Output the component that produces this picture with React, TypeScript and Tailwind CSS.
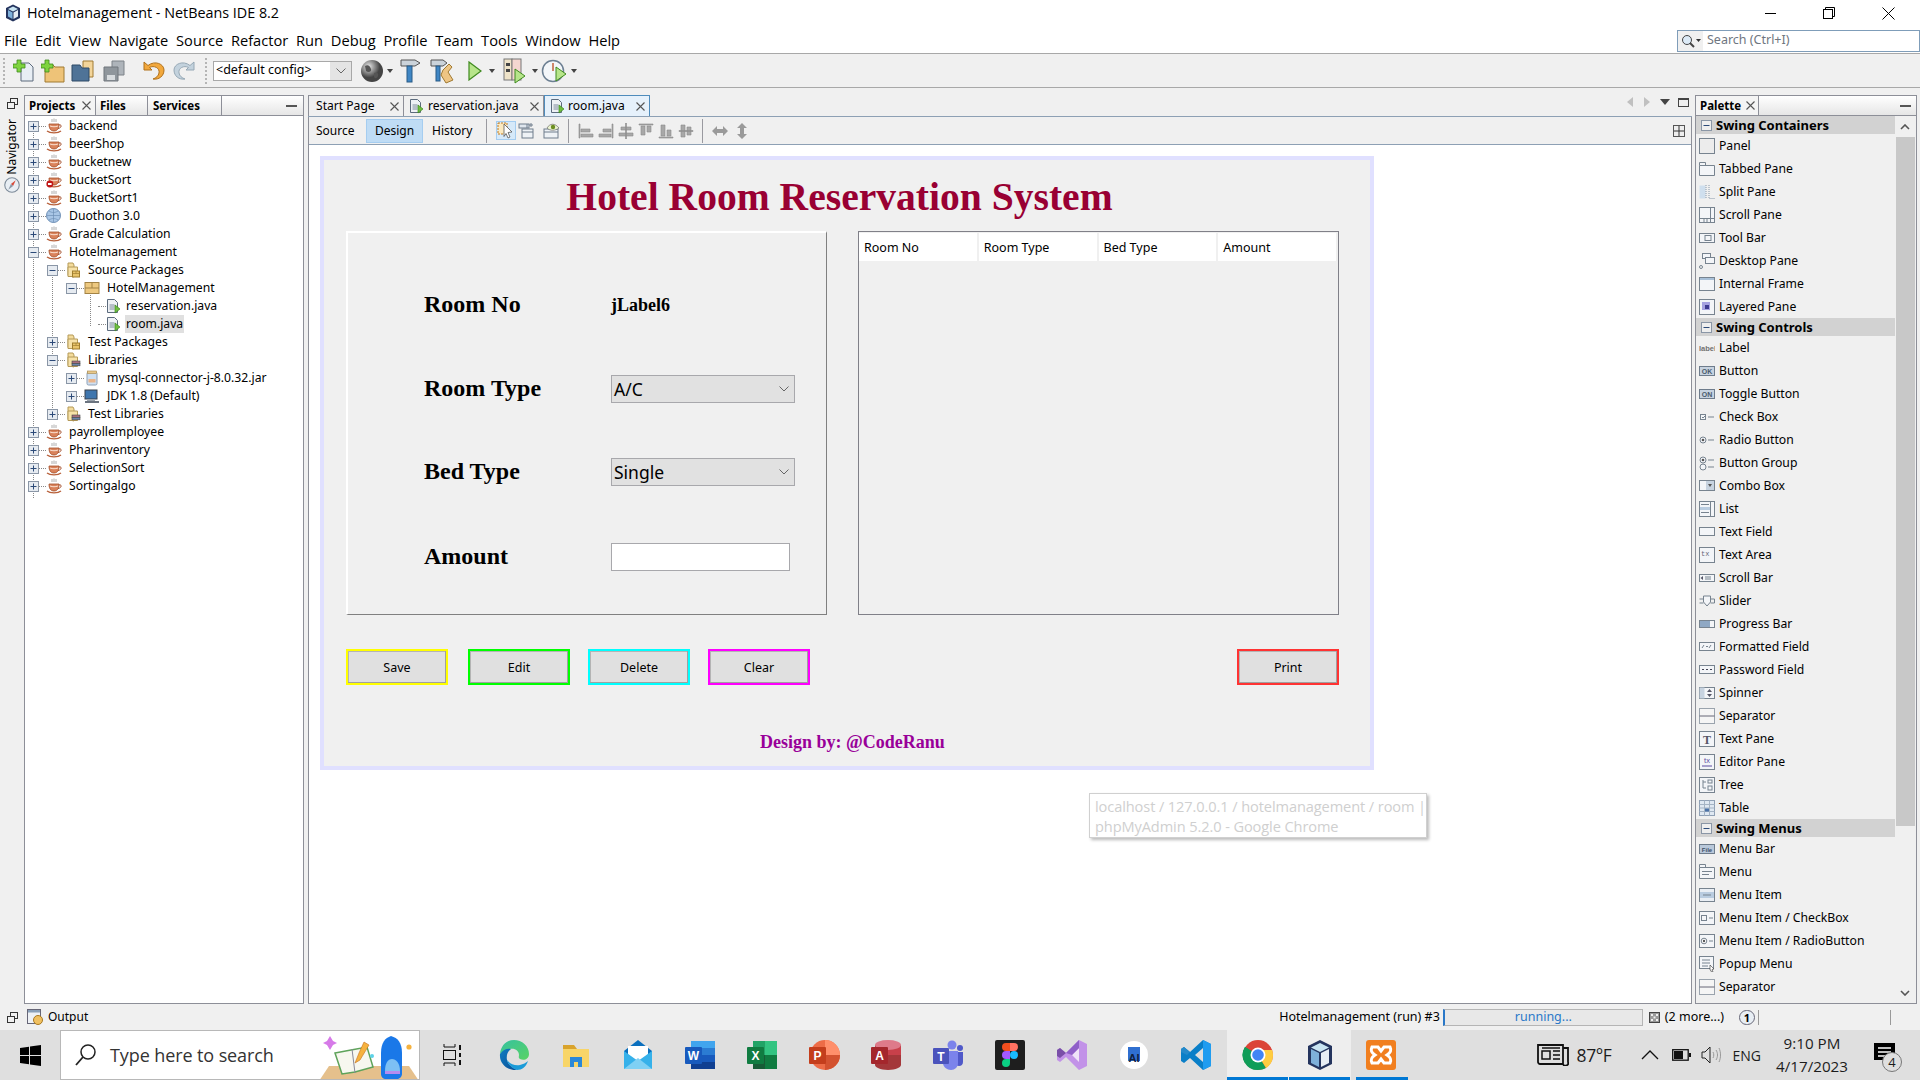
import type { ReactNode } from 'react'

const menuItems = ['File', 'Edit', 'View', 'Navigate', 'Source', 'Refactor', 'Run', 'Debug', 'Profile', 'Team', 'Tools', 'Window', 'Help']

type TreeRow = { depth: number; label: string; icon: string; exp?: '+' | '-'; selected?: boolean }

const treeRows: TreeRow[] = [
  { depth: 0, label: 'backend', icon: 'cup', exp: '+' },
  { depth: 0, label: 'beerShop', icon: 'cup', exp: '+' },
  { depth: 0, label: 'bucketnew', icon: 'cup', exp: '+' },
  { depth: 0, label: 'bucketSort', icon: 'cuperr', exp: '+' },
  { depth: 0, label: 'BucketSort1', icon: 'cup', exp: '+' },
  { depth: 0, label: 'Duothon 3.0', icon: 'globe', exp: '+' },
  { depth: 0, label: 'Grade Calculation', icon: 'cup', exp: '+' },
  { depth: 0, label: 'Hotelmanagement', icon: 'cup', exp: '-' },
  { depth: 1, label: 'Source Packages', icon: 'pkgfolder', exp: '-' },
  { depth: 2, label: 'HotelManagement', icon: 'pkg', exp: '-' },
  { depth: 3, label: 'reservation.java', icon: 'java' },
  { depth: 3, label: 'room.java', icon: 'java', selected: true },
  { depth: 1, label: 'Test Packages', icon: 'pkgfolder', exp: '+' },
  { depth: 1, label: 'Libraries', icon: 'libfolder', exp: '-' },
  { depth: 2, label: 'mysql-connector-j-8.0.32.jar', icon: 'jar', exp: '+' },
  { depth: 2, label: 'JDK 1.8 (Default)', icon: 'jdk', exp: '+' },
  { depth: 1, label: 'Test Libraries', icon: 'libfolder', exp: '+' },
  { depth: 0, label: 'payrollemployee', icon: 'cup', exp: '+' },
  { depth: 0, label: 'Pharinventory', icon: 'cup', exp: '+' },
  { depth: 0, label: 'SelectionSort', icon: 'cup', exp: '+' },
  { depth: 0, label: 'Sortingalgo', icon: 'cup', exp: '+' },
]

const paletteSections = [
  { title: 'Swing Containers', items: ['Panel', 'Tabbed Pane', 'Split Pane', 'Scroll Pane', 'Tool Bar', 'Desktop Pane', 'Internal Frame', 'Layered Pane'] },
  { title: 'Swing Controls', items: ['Label', 'Button', 'Toggle Button', 'Check Box', 'Radio Button', 'Button Group', 'Combo Box', 'List', 'Text Field', 'Text Area', 'Scroll Bar', 'Slider', 'Progress Bar', 'Formatted Field', 'Password Field', 'Spinner', 'Separator', 'Text Pane', 'Editor Pane', 'Tree', 'Table'] },
  { title: 'Swing Menus', items: ['Menu Bar', 'Menu', 'Menu Item', 'Menu Item / CheckBox', 'Menu Item / RadioButton', 'Popup Menu', 'Separator'] },
]

function Svg({ size = 16, children }: { size?: number; children: ReactNode }) {
  return (
    <svg width={size} height={size} viewBox="0 0 16 16" className="shrink-0">
      {children}
    </svg>
  )
}

function CloseX() {
  return (
    <svg width="9" height="9" viewBox="0 0 9 9" className="shrink-0">
      <path d="M0.5 0.5l8 8M8.5 0.5l-8 8" stroke="#555" strokeWidth="1.1" />
    </svg>
  )
}

function Cup() {
  return (
    <>
      <path d="M6 1v3M8 0.5v3.5M10 1v3" stroke="#9a9a9a" strokeWidth="0.8" fill="none" />
      <path d="M3 6h10c0 5-2 7-5 7s-5-2-5-7z" fill="#d9825b" stroke="#a5502c" strokeWidth="0.8" />
      <path d="M4 8c3 1 5 1 8 0" stroke="#fbe3d3" strokeWidth="1" fill="none" />
      <path d="M13 7c3-1 3 3-1 3.5" stroke="#a5502c" fill="none" />
      <path d="M1 13c3 2.5 11 2.5 14 0" stroke="#b8613b" strokeWidth="1.3" fill="none" />
    </>
  )
}

function JavaFile() {
  return (
    <>
      <path d="M2.5 1.5h7l3 3v10h-10z" fill="#eef1f5" stroke="#5c6b7d" />
      <path d="M4.5 7h5M4.5 9h5M4.5 11h5" stroke="#7c8b9c" />
      <path d="M10 7l5 4-5 4z" fill="#6fbf3f" stroke="#3d8a1f" strokeWidth="0.7" />
    </>
  )
}

function FolderBase() {
  return <path d="M3 1h5l1 2v12l-6-1.5z" fill="#f4dc9c" stroke="#b59a58" />
}

function TreeIcon({ name }: { name: string }) {
  if (name === 'cup') return <Svg><Cup /></Svg>
  if (name === 'cuperr')
    return (
      <Svg>
        <Cup />
        <circle cx="3.8" cy="12" r="3.4" fill="#c01818" />
        <rect x="2" y="11" width="3.6" height="2" fill="#fff" />
      </Svg>
    )
  if (name === 'globe')
    return (
      <Svg>
        <circle cx="7.5" cy="7.5" r="7" fill="#a9c6e6" stroke="#6e8fb5" />
        <path d="M0.5 7.5h14M7.5 0.5v14M3 3c3 2 6 2 9 0M3 12c3-2 6-2 9 0" stroke="#6e8fb5" strokeWidth="0.7" fill="none" />
      </Svg>
    )
  if (name === 'pkgfolder')
    return (
      <Svg>
        <FolderBase />
        <path d="M3 5h9.5v9.5H3z" fill="#f7e2a8" stroke="#b59a58" />
        <rect x="7.5" y="9" width="7" height="6" fill="#e8c46a" stroke="#a07e2f" />
        <path d="M7.5 11.5h7M11 9v2.5" stroke="#a07e2f" strokeWidth="0.7" />
      </Svg>
    )
  if (name === 'libfolder')
    return (
      <Svg>
        <FolderBase />
        <path d="M3 5h9.5v9.5H3z" fill="#f7e2a8" stroke="#b59a58" />
        <rect x="7" y="9" width="8" height="2.4" fill="#a8707c" stroke="#444" strokeWidth="0.6" />
        <rect x="7" y="11.4" width="8" height="2.4" fill="#6c86ac" stroke="#444" strokeWidth="0.6" />
      </Svg>
    )
  if (name === 'pkg')
    return (
      <Svg>
        <rect x="1" y="2.5" width="14" height="11" fill="#eec980" stroke="#a38345" />
        <path d="M1 8h14M8 2.5V8" stroke="#a38345" />
      </Svg>
    )
  if (name === 'java') return <Svg><JavaFile /></Svg>
  if (name === 'jar')
    return (
      <Svg>
        <rect x="3" y="2" width="10" height="13" rx="1.5" fill="#cfe0f2" stroke="#8fa0b5" />
        <rect x="3.5" y="1" width="9" height="2.5" fill="#e8c98c" stroke="#a38345" strokeWidth="0.6" />
        <rect x="4.5" y="9" width="7" height="3.5" fill="#eab48a" />
      </Svg>
    )
  return (
    <Svg>
      <rect x="1" y="2" width="12" height="9" fill="#3f76ae" stroke="#39414d" />
      <rect x="3" y="11" width="8" height="2" fill="#9aa3ad" />
      <rect x="1" y="13" width="14" height="2" fill="#6b7480" />
    </Svg>
  )
}

function Expander({ kind }: { kind: '+' | '-' }) {
  return (
    <svg width="11" height="11" viewBox="0 0 11 11" className="relative z-10 shrink-0">
      <rect x="0.5" y="0.5" width="10" height="10" fill="#e6ebf1" stroke="#8a96a6" />
      <path d={kind === '+' ? 'M2.5 5.5h6M5.5 2.5v6' : 'M2.5 5.5h6'} stroke="#2c4a78" />
    </svg>
  )
}

function Project() {
  return (
    <aside className="relative h-full w-[280px] shrink-0 border border-[#8d8f98] bg-white">
      <div className="flex h-[20px] border-b border-[#8d8f98] bg-gradient-to-b from-white to-[#e6e6e6] text-[11.5px] font-bold text-black">
        <div className="flex w-[71px] items-center gap-[7px] border-r border-[#8d8f98] bg-[#f4f4f4] pl-[4px]">
          Projects <CloseX />
        </div>
        <div className="flex w-[52px] items-center border-r border-[#8d8f98] pl-[4px]">Files</div>
        <div className="flex w-[74px] items-center border-r border-[#8d8f98] pl-[5px]">Services</div>
        <div className="flex flex-1 items-center justify-end pr-[6px]">
          <div className="h-[2px] w-[11px] bg-[#555]" />
        </div>
      </div>
      <div className="relative pt-px">
        <div className="absolute left-[8px] top-[12px] h-[370px] border-l border-dotted border-[#888]" />
        <div className="absolute left-[27px] top-[156px] h-[144px] border-l border-dotted border-[#888]" />
        <div className="absolute left-[65px] top-[174px] h-[36px] border-l border-dotted border-[#888]" />
        {treeRows.map((row, i) => (
          <div key={i} className="relative flex h-[18px] items-center text-[12.2px] leading-none text-black">
            <div className="flex w-[40px] shrink-0 items-center" style={{ marginLeft: 3 + row.depth * 19 }}>
              {row.exp ? <Expander kind={row.exp} /> : <div className="ml-[13px] h-0 w-[20px] border-t border-dotted border-[#888]" />}
              {row.exp && <div className="h-0 w-[7px] border-t border-dotted border-[#888]" />}
              <span className={row.exp ? '' : '-ml-[13px]'}>
                <TreeIcon name={row.icon} />
              </span>
            </div>
            <span className={row.selected ? 'flex h-[18px] items-center bg-[#e0e0e0] px-px' : 'px-px'}>{row.label}</span>
          </div>
        ))}
      </div>
    </aside>
  )
}

function PaletteIcon({ name }: { name: string }) {
  const box = { fill: '#f3f5f8', stroke: '#77838f' }
  const line = { stroke: '#77838f', fill: 'none' }
  let body: ReactNode = <rect x="0.5" y="1.5" width="15" height="13" {...box} />
  switch (name) {
    case 'Panel':
      body = <rect x="0.5" y="0.5" width="15" height="15" fill="#ececec" stroke="#77838f" />
      break
    case 'Tabbed Pane':
      body = <path d="M0.5 4.5v-3h6v3M0.5 4.5h15v10h-15z" {...box} />
      break
    case 'Split Pane':
      body = <><rect x="0.5" y="1.5" width="6" height="13" fill="#cfdfee" /><path d="M7 1v14M10 1v14M10.5 14.5h5" stroke="#8899aa" strokeDasharray="1 1" fill="none" /></>
      break
    case 'Scroll Pane':
      body = <><rect x="0.5" y="0.5" width="15" height="15" {...box} /><path d="M0.5 11.5h15M11.5 0.5v15M5 11.5v4M8 11.5v4" {...line} /></>
      break
    case 'Tool Bar':
      body = <><rect x="0.5" y="3.5" width="15" height="9" {...box} /><rect x="6" y="5.5" width="6" height="5" {...box} /></>
      break
    case 'Desktop Pane':
      body = <><rect x="3.5" y="0.5" width="8" height="5" {...box} /><rect x="6.5" y="4.5" width="9" height="6" {...box} /><circle cx="2" cy="14" r="1.5" {...line} /></>
      break
    case 'Internal Frame':
      body = <><rect x="0.5" y="1.5" width="15" height="13" {...box} /><rect x="1" y="2" width="14" height="2" fill="#a8c0d8" /></>
      break
    case 'Layered Pane':
      body = <><rect x="0.5" y="0.5" width="15" height="15" {...box} /><rect x="3" y="3" width="8" height="8" fill="#a6a2e0" /><rect x="6" y="6" width="4" height="4" fill="#3e3a90" /></>
      break
    case 'Label':
      body = <text x="0" y="11" fontSize="7.5" fontWeight="700" fill="#707070" fontFamily="Liberation Sans">label</text>
      break
    case 'Button':
    case 'Toggle Button':
      body = <><rect x="0.5" y="3.5" width="15" height="9" fill="#c7d3e0" stroke="#6e7c8c" /><text x="8" y="10.5" textAnchor="middle" fontSize="7" fontWeight="700" fill="#4a5a6c" fontFamily="Liberation Sans">{name === 'Button' ? 'OK' : 'ON'}</text></>
      break
    case 'Check Box':
      body = <><rect x="1.5" y="5.5" width="5" height="5" {...box} /><path d="M3 8l1 1 2-2" {...line} /><path d="M9 8h6" {...line} /></>
      break
    case 'Radio Button':
      body = <><circle cx="4" cy="8" r="3" {...box} /><circle cx="4" cy="8" r="1.3" fill="#555" /><path d="M9 8h6" {...line} /></>
      break
    case 'Button Group':
      body = <><circle cx="4" cy="5" r="3" {...box} /><circle cx="4" cy="5" r="1.3" fill="#555" /><circle cx="4" cy="12" r="3" {...box} /><path d="M9 5h6M9 12h6" {...line} /></>
      break
    case 'Combo Box':
      body = <><rect x="0.5" y="2.5" width="15" height="10" {...box} /><rect x="7" y="3" width="8" height="9" fill="#c7d3e0" /><path d="M9 6h4l-2 3z" fill="#555" /></>
      break
    case 'List':
      body = <><rect x="0.5" y="0.5" width="15" height="15" {...box} /><path d="M2 3.5h8M2 7.5h8M2 11.5h8M11.5 0.5v15" {...line} /><rect x="1" y="6" width="10" height="3" fill="#b9cce0" /></>
      break
    case 'Text Field':
      body = <rect x="0.5" y="3.5" width="15" height="8" {...box} />
      break
    case 'Text Area':
      body = <><rect x="0.5" y="0.5" width="15" height="15" {...box} /><text x="2" y="8.5" fontSize="7" fill="#667" fontFamily="Liberation Mono">tx</text></>
      break
    case 'Scroll Bar':
      body = <><rect x="0.5" y="4.5" width="15" height="7" {...box} /><path d="M4 6v4L1.5 8z" fill="#556" /><path d="M7 6v4M9 6v4M11 6v4" {...line} /></>
      break
    case 'Slider':
      body = <><path d="M0.5 6h4M11.5 6h4v4h-4M0.5 10h4" {...line} /><path d="M4.5 3h7v6l-3.5 4-3.5-4z" {...box} /></>
      break
    case 'Progress Bar':
      body = <><rect x="0.5" y="4.5" width="15" height="7" {...box} /><rect x="1" y="5" width="10" height="6" fill="#8fa8c4" /></>
      break
    case 'Formatted Field':
      body = <><rect x="0.5" y="3.5" width="15" height="8" {...box} /><path d="M3 9l2-3M7 7.5h2M10 9l2-3" {...line} /></>
      break
    case 'Password Field':
      body = <><rect x="0.5" y="3.5" width="15" height="8" {...box} /><path d="M3 7.5h2M7 7.5h2M11 7.5h2" stroke="#445" fill="none" /></>
      break
    case 'Spinner':
      body = <><rect x="0.5" y="2.5" width="15" height="11" {...box} /><rect x="0.5" y="2.5" width="5" height="11" fill="#c7d3e0" /><path d="M8 7l2.5-3L13 7zM8 9l2.5 3L13 9z" fill="#556" /></>
      break
    case 'Separator':
      body = <><rect x="0.5" y="0.5" width="15" height="15" fill="#f5f5f5" stroke="#9aa3ad" /><path d="M0.5 8h15" stroke="#667" /></>
      break
    case 'Text Pane':
      body = <><rect x="0.5" y="0.5" width="15" height="15" {...box} /><text x="8" y="12.5" textAnchor="middle" fontSize="12" fontWeight="700" fill="#556" fontFamily="Liberation Serif">T</text></>
      break
    case 'Editor Pane':
      body = <><rect x="0.5" y="0.5" width="15" height="15" {...box} /><text x="8" y="9" textAnchor="middle" fontSize="7.5" fill="#5a4aa0" fontFamily="Liberation Sans">tx</text><path d="M3 12h10" stroke="#5a4aa0" /></>
      break
    case 'Tree':
      body = <><rect x="0.5" y="0.5" width="15" height="15" {...box} /><rect x="9" y="3" width="4" height="3" {...box} /><rect x="9" y="9" width="4" height="4" {...box} /><path d="M4 3v8h3M4 5h3" {...line} /></>
      break
    case 'Table':
      body = <><rect x="0.5" y="0.5" width="15" height="15" fill="#dfe8f2" stroke="#8fa0b5" /><path d="M0.5 4.5h15M0.5 8h15M0.5 11.5h15M5.5 0.5v15M10.5 0.5v15" stroke="#a4b3c4" fill="none" /><rect x="6" y="8.5" width="4" height="3" fill="#4b72a8" /></>
      break
    case 'Menu Bar':
      body = <><rect x="0.5" y="3.5" width="15" height="9" fill="#b9c8da" stroke="#6e7c8c" /><text x="8" y="10.5" textAnchor="middle" fontSize="6" fontWeight="700" fill="#3f5068" fontFamily="Liberation Sans">File</text></>
      break
    case 'Menu':
      body = <><path d="M0.5 3.5V0.5h6v3M0.5 3.5h15v11h-15z" {...box} /><path d="M3 7.5h10M3 10.5h7" {...line} /></>
      break
    case 'Menu Item':
      body = <><rect x="0.5" y="1.5" width="15" height="13" fill="#e9eef4" stroke="#77838f" /><rect x="1" y="5" width="14" height="6" fill="#b9cce0" /><path d="M4 8h8" {...line} /></>
      break
    case 'Menu Item / CheckBox':
      body = <><rect x="0.5" y="1.5" width="15" height="13" {...box} /><rect x="2.5" y="5.5" width="5" height="5" {...box} /><path d="M10 8h4" {...line} /></>
      break
    case 'Menu Item / RadioButton':
      body = <><rect x="0.5" y="1.5" width="15" height="13" {...box} /><circle cx="5" cy="8" r="2.8" fill="#fff" stroke="#77838f" /><circle cx="5" cy="8" r="1.2" fill="#555" /><path d="M10 8h4" {...line} /></>
      break
    case 'Popup Menu':
      body = <><rect x="0.5" y="0.5" width="14" height="12" {...box} /><path d="M3 4h8M3 7h8M3 10h6" {...line} /><path d="M11 9l4 4-2 .5 1 2.5-1.500 0-1-2L11 14z" fill="#fff" stroke="#333" strokeWidth="0.6" /></>
      break
  }
  return <Svg>{body}</Svg>
}

function Palette() {
  return (
    <aside className="flex h-full w-[222px] shrink-0 flex-col border border-[#8d8f98] bg-[#f0f0f0]">
      <div className="flex h-[20px] shrink-0 border-b border-[#8d8f98] bg-gradient-to-b from-white to-[#e6e6e6] text-[11.5px] text-black">
        <div className="flex w-[63px] items-center gap-[5px] border-r border-[#8d8f98] bg-[#f4f4f4] pl-[4px] font-bold">
          Palette <CloseX />
        </div>
        <div className="flex flex-1 items-center justify-end pr-[5px]">
          <div className="h-[2px] w-[11px] bg-[#555]" />
        </div>
      </div>
      <div className="flex min-h-0 flex-1">
        <div className="w-[199px] shrink-0 overflow-hidden">
          {paletteSections.map((s) => (
            <div key={s.title}>
              <div className="flex h-[18px] items-center gap-[4px] bg-[#d2d2d2] pl-[5px] text-[13px] font-bold leading-none text-black">
                <svg width="11" height="11" viewBox="0 0 11 11">
                  <rect x="0.5" y="0.5" width="10" height="10" fill="#eee" stroke="#8a96a6" />
                  <path d="M2.5 5.5h6" stroke="#2c4a78" />
                </svg>
                {s.title}
              </div>
              {s.items.map((item, i) => (
                <div key={i} className="flex h-[23px] items-center gap-[4px] pl-[3px] pt-px text-[12.2px] leading-none text-black">
                  <PaletteIcon name={item} />
                  {item}
                </div>
              ))}
            </div>
          ))}
        </div>
        <div className="flex w-[20px] flex-col bg-[#f0f0f0]">
          <div className="flex h-[21px] items-center justify-center">
            <svg width="10" height="6" viewBox="0 0 10 6"><path d="M1 5l4-4 4 4" fill="none" stroke="#555" strokeWidth="1.6" /></svg>
          </div>
          <div className="ml-px h-[689px] bg-[#c8c8c8]" />
          <div className="mt-auto flex h-[20px] items-center justify-center">
            <svg width="10" height="6" viewBox="0 0 10 6"><path d="M1 1l4 4 4-4" fill="none" stroke="#555" strokeWidth="1.6" /></svg>
          </div>
        </div>
      </div>
    </aside>
  )
}

function ToolSep() {
  return <div className="h-[24px] w-px shrink-0 bg-[#9a9aa0]" />
}

function AlignIcon({ d }: { d: string }) {
  return (
    <svg width="16" height="16" viewBox="0 0 16 16" className="shrink-0">
      <path d={d} fill="#a8a8a8" stroke="#8a8a8a" strokeWidth="0.6" />
    </svg>
  )
}

function DesignToolbar() {
  return (
    <div className="flex h-[28px] shrink-0 items-center border-b border-[#8da0b4] text-[12px] text-black">
      <span className="ml-[7px] w-[50px]">Source</span>
      <span className="flex h-[24px] w-[57px] items-center justify-center border border-[#a5cdf0] bg-[#bfdcf5]">Design</span>
      <span className="ml-[9px] w-[54px]">History</span>
      <ToolSep />
      <div className="ml-[9px] flex h-[19px] w-[20px] items-center justify-center border border-[#a5cdf0] bg-[#d6e9f9]">
        <svg width="18" height="17" viewBox="0 0 18 17">
          <rect x="1" y="1" width="9" height="11" fill="#fbe9c0" stroke="#c07a20" strokeDasharray="2 1" />
          <path d="M7 2l8 8-4 .5 2 4.5-2 1-2-4.5-2 3z" fill="#fff" stroke="#555" strokeWidth="0.8" />
        </svg>
      </div>
      <svg width="16" height="16" viewBox="0 0 16 16" className="ml-[2px]">
        <rect x="1" y="1" width="10" height="4" fill="#dfe6ee" stroke="#6e7c8c" />
        <rect x="4" y="6" width="11" height="9" fill="#eef2f6" stroke="#6e7c8c" />
        <path d="M4 9h11M9 1v4M13 0v4M11 2h4" stroke="#6e7c8c" fill="none" />
      </svg>
      <svg width="17" height="16" viewBox="0 0 17 16" className="ml-[9px]">
        <rect x="1" y="6" width="14" height="9" fill="#eef2f6" stroke="#6e7c8c" />
        <path d="M1 9h14" stroke="#6e7c8c" />
        <path d="M4 5c3-5 8-5 12 0-4 3-9 3-12 0z" fill="#eaf3d0" stroke="#555" strokeWidth="0.6" />
        <circle cx="10" cy="4" r="2.2" fill="#6b8e1f" />
      </svg>
      <div className="ml-[8px]"><ToolSep /></div>
      <div className="ml-[9px] flex items-center gap-[4px]">
        <AlignIcon d="M1 1h1v14H1zM3 6h9v3H3zM3 11h12v3H3z" />
        <AlignIcon d="M14 1h1v14h-1zM5 6h8v3H5zM1 11h12v3H1z" />
        <AlignIcon d="M7.5 0h1v16h-1zM3 4h10v3H3zM1 10h14v3H1z" />
        <AlignIcon d="M1 1h14v1H1zM3 3h4v9H3zM9 3h4v6H9z" />
        <AlignIcon d="M1 14h14v1H1zM3 2h4v11H3zM9 7h4v6H9z" />
        <AlignIcon d="M1 7.5h14v1H1zM3 2h4v12H3zM9 4h4v8H9z" />
      </div>
      <div className="ml-[8px]"><ToolSep /></div>
      <svg width="16" height="12" viewBox="0 0 16 12" className="ml-[9px]">
        <path d="M0 6l5-5v3h6V1l5 5-5 5V8H5v3z" fill="#9a9a9a" />
      </svg>
      <svg width="12" height="16" viewBox="0 0 12 16" className="ml-[8px]">
        <path d="M6 0l5 5H8v6h3l-5 5-5-5h3V5H1z" fill="#9a9a9a" />
      </svg>
      <svg width="12" height="12" viewBox="0 0 12 12" className="ml-auto mr-[6px]">
        <rect x="0.5" y="0.5" width="11" height="11" fill="#eee" stroke="#555" />
        <path d="M6 1v10M1 6h10" stroke="#333" />
      </svg>
    </div>
  )
}

const formButtons = [
  { label: 'Save', cls: 'border-[#ffff00]' },
  { label: 'Edit', cls: 'ml-[20px] border-[#00ff00]' },
  { label: 'Delete', cls: 'ml-[18px] border-[#00ffff]' },
  { label: 'Clear', cls: 'ml-[18px] border-[#ff00ff]' },
  { label: 'Print', cls: 'ml-auto border-[#ff3333]' },
]

function Combo({ value }: { value: string }) {
  return (
    <div className="flex h-[28px] w-[184px] items-center border border-[#a8a8ac] bg-[#e1e1e1] pl-[2px] pr-[5px] text-[17.5px]">
      <span className="flex-1">{value}</span>
      <svg width="10" height="6" viewBox="0 0 10 6"><path d="M0.5 0.5L5 5l4.5-4.500" fill="none" stroke="#666" /></svg>
    </div>
  )
}

function FormLabel({ children }: { children: ReactNode }) {
  return <div className="-mt-[2px] w-[187px] font-['Liberation_Serif',serif] text-[24px] font-bold leading-none text-black">{children}</div>
}

function RoomForm() {
  return (
    <div className="ml-[11px] mt-[11px] flex h-[614px] w-[1054px] flex-col border-4 border-[#e0e0ff] bg-[#f0f0f0] pl-[22px] pr-[31px]">
      <div className="flex h-[71px] shrink-0 items-center justify-center pr-[6px] pt-[4px] font-['Liberation_Serif',serif] text-[39.6px] font-bold leading-none text-[#990033]">
        Hotel Room Reservation System
      </div>
      <div className="flex h-[384px] shrink-0 gap-[31px]">
        <div className="h-full w-[481px] border-b border-l-2 border-r border-t-2 border-b-[#808080] border-l-white border-r-[#808080] border-t-white pl-[76px] pt-[58px]">
          <div className="flex h-[28px] items-center">
            <FormLabel>Room No</FormLabel>
            <span className="font-['Liberation_Serif',serif] text-[18px] font-bold text-black">jLabel6</span>
          </div>
          <div className="mt-[56px] flex h-[28px] items-center">
            <FormLabel>Room Type</FormLabel>
            <Combo value="A/C" />
          </div>
          <div className="mt-[55px] flex h-[28px] items-center">
            <FormLabel>Bed Type</FormLabel>
            <Combo value="Single" />
          </div>
          <div className="mt-[57px] flex h-[28px] items-center">
            <FormLabel>Amount</FormLabel>
            <div className="h-[28px] w-[179px] border border-[#a8a8ac] bg-white" />
          </div>
        </div>
        <div className="h-full w-[481px] border border-[#808088] pt-px">
          <div className="flex h-[28px] gap-[2px] pr-[2px] text-[12.5px] text-black">
            {['Room No', 'Room Type', 'Bed Type', 'Amount'].map((h) => (
              <div key={h} className="flex flex-1 items-center bg-white pl-[5px] pt-[2px]">{h}</div>
            ))}
          </div>
        </div>
      </div>
      <div className="mt-[34px] flex h-[36px] shrink-0">
        {formButtons.map((b) => (
          <div key={b.label} className={`flex h-[36px] w-[102px] items-center justify-center border-2 bg-[#e0e0e0] pt-[2px] text-[12.5px] text-black shadow-[inset_-1px_-1px_0_#a0a0a0,inset_1px_1px_0_#b4b4b4] ${b.cls}`}>
            {b.label}
          </div>
        ))}
      </div>
      <div className="mt-[48px] pl-[414px] font-['Liberation_Serif',serif] text-[18px] font-bold leading-none text-[#990099]">
        Design by: @CodeRanu
      </div>
    </div>
  )
}

function Editor() {
  return (
    <main className="flex h-full w-[1384px] shrink-0 flex-col">
      <div className="flex h-[22px] shrink-0 items-stretch border-b border-[#8da0b4] text-[12.1px] text-black">
        <div className="flex w-[96px] items-center justify-between border-l border-r border-t border-[#8d8f98] bg-[#f0f0f0] pl-[7px] pr-[4px]">
          Start Page <CloseX />
        </div>
        <div className="flex w-[140px] items-center gap-[4px] border-r border-t border-[#8d8f98] bg-[#f0f0f0] pl-[4px] pr-[4px]">
          <Svg><JavaFile /></Svg>
          <span className="flex-1">reservation.java</span>
          <CloseX />
        </div>
        <div className="flex w-[106px] items-center gap-[3px] border border-b-0 border-[#4f8cbc] bg-[#e6f1fb] pl-[4px] pr-[4px]">
          <Svg><JavaFile /></Svg>
          <span className="flex-1">room.java</span>
          <CloseX />
        </div>
        <div className="ml-auto flex items-center pb-[7px] pr-[3px]">
          <svg width="6" height="10" viewBox="0 0 6 10"><path d="M6 0v10L0 5z" fill="#c0c0c0" /></svg>
          <svg width="6" height="10" className="ml-[11px]" viewBox="0 0 6 10"><path d="M0 0v10l6-5z" fill="#c0c0c0" /></svg>
          <svg width="10" height="6" className="ml-[10px]" viewBox="0 0 10 6"><path d="M0 0h10L5 6z" fill="#444" /></svg>
          <svg width="11" height="9" className="ml-[8px]" viewBox="0 0 11 9"><rect x="0.5" y="0.5" width="10" height="8" fill="none" stroke="#444" /><path d="M0 1h11" stroke="#444" strokeWidth="2" /></svg>
        </div>
      </div>
      <div className="flex min-h-0 flex-1 flex-col border-l border-r border-[#8d8f98] bg-[#f0f0f0]">
        <DesignToolbar />
        <div className="min-h-0 flex-1 border-b border-[#8d8f98] bg-white">
          <RoomForm />
        </div>
      </div>
    </main>
  )
}

function RestoreIcon() {
  return (
    <svg width="11" height="11" viewBox="0 0 11 11" className="shrink-0">
      <rect x="3.5" y="0.5" width="7" height="6" fill="none" stroke="#333" />
      <rect x="0.5" y="4.5" width="7" height="6" fill="#f0f0f0" stroke="#333" />
    </svg>
  )
}

function MainToolbar() {
  const dots = <div className="h-[26px] w-0 shrink-0 border-l-2 border-dotted border-[#b5b5b5]" />
  const arrow = <svg width="6" height="4" viewBox="0 0 6 4" className="shrink-0"><path d="M0 0h6L3 4z" fill="#444" /></svg>
  return (
    <div className="flex h-[35px] shrink-0 items-center border-b border-t border-[#a8a8a8] bg-[#f0f0f0] pl-[3px]">
      {dots}
      <svg width="22" height="24" viewBox="0 0 22 24" className="ml-[8px]">
        <path d="M8 4h8l4 4v14H8z" fill="#e8eef4" stroke="#5c6b7d" />
        <path d="M0 5h4V1h4v4h4v4H8v4H4V9H0z" fill="#7ed33f" stroke="#3f8a1f" strokeWidth="0.8" />
      </svg>
      <svg width="24" height="24" viewBox="0 0 24 24" className="ml-[6px]">
        <path d="M4 6h8l2 2h9v15H4z" fill="#eec378" stroke="#a07a32" />
        <path d="M0 5h4V1h4v4h4v4H8v4H4V9H0z" fill="#7ed33f" stroke="#3f8a1f" strokeWidth="0.8" />
      </svg>
      <svg width="24" height="24" viewBox="0 0 24 24" className="ml-[6px]">
        <path d="M12 2h10v16H12z" fill="#f3d59a" stroke="#a07a32" />
        <path d="M1 6h8l2 3h7v13H1z" fill="#4f7397" stroke="#2f4a66" />
      </svg>
      <svg width="24" height="24" viewBox="0 0 24 24" className="ml-[8px]">
        <path d="M9 2h12v14H9z" fill="#aeb4ba" stroke="#7c8288" />
        <path d="M1 8h14v14H1z" fill="#8f969c" stroke="#70767c" />
        <rect x="4" y="16" width="8" height="5" fill="#d8dcdf" />
      </svg>
      <svg width="22" height="24" viewBox="0 0 22 24" className="ml-[16px]">
        <path d="M1 3v8h8L6.500 8.500C11 6 17 9 16 14c-.5 3-3 5-6 6 6 1 11-3 11-9C21 5 12 1 5 6.500z" fill="#f2a83c" stroke="#b0701a" />
      </svg>
      <svg width="24" height="24" viewBox="0 0 22 24" className="ml-[7px]">
        <path d="M21 3v8h-8l2.500-2.500C11 6 5 9 6 14c.5 3 3 5 6 6-6 1-11-3-11-9C1 5 10 1 17 6.500z" fill="#c3d2dd" stroke="#96a8b5" />
      </svg>
      <div className="ml-[9px]">{dots}</div>
      <div className="ml-[6px] flex h-[20px] w-[139px] items-center border border-[#a8a8a8] bg-[#e4e4e4] pr-[5px]">
        <span className="flex h-[18px] w-[116px] items-center bg-white pl-[2px] text-[12.5px] text-black">&lt;default config&gt;</span>
        <svg width="10" height="6" viewBox="0 0 10 6" className="ml-auto"><path d="M0.5 0.5L5 5l4.5-4.500" fill="none" stroke="#666" /></svg>
      </div>
      <svg width="24" height="24" viewBox="0 0 24 24" className="ml-[8px]">
        <defs><radialGradient id="gl" cx="0.35" cy="0.3"><stop offset="0" stopColor="#e8e8e8" /><stop offset="1" stopColor="#444" /></radialGradient></defs>
        <circle cx="12" cy="12" r="11" fill="url(#gl)" />
        <path d="M5 7c3-2 5 0 6 3s-3 4-5 2zM14 14c3-1 5 0 4 3s-4 3-4 0z" fill="#555" />
      </svg>
      <div className="ml-[3px]">{arrow}</div>
      <svg width="22" height="26" viewBox="0 0 22 26" className="ml-[7px]">
        <path d="M1 2h14l5 3-5 3H1z" fill="#cbd3da" stroke="#555" />
        <rect x="7" y="8" width="5" height="16" fill="#3f86c4" stroke="#285a86" />
      </svg>
      <svg width="26" height="26" viewBox="0 0 26 26" className="ml-[8px]">
        <path d="M1 2h12l4 3-4 3H1z" fill="#cbd3da" stroke="#555" />
        <rect x="6" y="8" width="4" height="15" fill="#3f86c4" stroke="#285a86" />
        <path d="M13 12l6-6 3 3-4 5 5 8-7 3-5-8z" fill="#eec584" stroke="#a07a32" />
      </svg>
      <svg width="14" height="20" viewBox="0 0 14 20" className="ml-[12px]">
        <path d="M1 1l12 9-12 9z" fill="#b7e58a" stroke="#3f8a1f" strokeWidth="1.2" />
      </svg>
      <div className="ml-[7px]">{arrow}</div>
      <svg width="24" height="26" viewBox="0 0 24 26" className="ml-[8px]">
        <rect x="1" y="1" width="8" height="21" fill="#efe3c8" stroke="#777" />
        <rect x="9" y="1" width="9" height="21" fill="#f4d6d0" stroke="#777" />
        <rect x="3" y="5" width="4" height="3" fill="#444" />
        <rect x="3" y="11" width="4" height="3" fill="#444" />
        <path d="M12 11l10 7-10 7z" fill="#b7e58a" stroke="#3f8a1f" />
      </svg>
      <div className="ml-[5px]">{arrow}</div>
      <svg width="26" height="26" viewBox="0 0 26 26" className="ml-[3px]">
        <circle cx="12" cy="13" r="10.5" fill="#f3f6f9" stroke="#6c7f92" strokeWidth="1.5" />
        <path d="M12 5v8" stroke="#c2603a" strokeWidth="1.5" />
        <path d="M15 9l10 7-10 7z" fill="#b7e58a" stroke="#3f8a1f" />
      </svg>
      <div className="ml-[4px]">{arrow}</div>
    </div>
  )
}

function TaskIcon({ children, active, underline }: { children: ReactNode; active?: boolean; underline?: boolean }) {
  return (
    <div className={`relative flex h-full w-[62px] shrink-0 items-center justify-center ${active ? 'bg-[#eeeeee]' : ''}`}>
      <svg width="32" height="32" viewBox="0 0 32 32">{children}</svg>
      {underline && <div className={`absolute bottom-0 h-[3px] bg-[#0078d4] ${active ? 'left-0 right-px' : 'left-[6px] right-[4px]'}`} />}
    </div>
  )
}

function Taskbar() {
  return (
    <footer className="flex h-[50px] shrink-0 items-stretch bg-[#dfdfdf] text-[#1c1c1c]">
      <div className="flex w-[60px] shrink-0 items-center justify-center">
        <svg width="21" height="21" viewBox="0 0 21 21"><path d="M0 3l9-1.300V10H0zM10 1.500L21 0v10H10zM0 11h9v8.300L0 18zM10 11h11v10l-11-1.500z" fill="#000" /></svg>
      </div>
      <div className="relative flex w-[360px] shrink-0 items-center overflow-hidden border border-[#b8b8b8] bg-white pl-[14px] font-['Open_Sans',sans-serif] text-[18px] text-[#333]">
        <svg width="22" height="24" viewBox="0 0 22 24" className="mr-[13px]">
          <circle cx="13" cy="9" r="7" fill="none" stroke="#222" strokeWidth="1.5" />
          <path d="M8 14L1 22" stroke="#222" strokeWidth="1.8" />
        </svg>
        <span className="tracking-[-0.1px]">Type here to search</span>
        <svg width="100" height="50" viewBox="0 0 100 50" className="absolute right-0 top-0">
          <path d="M8 10l3-5 3 5 4 2-4 2-3 5-3-5-4-2z" fill="#d67ae8" />
          <path d="M0 50l10-15h80l10 15z" fill="#e5c08c" />
          <path d="M16 22l16-3 16-3 6 20-18 5-13 2z" fill="#f7f7ef" stroke="#5ea35a" strokeWidth="1.5" />
          <path d="M33 18l3 24" stroke="#889" />
          <path d="M40 22l-4 10 5-3 9-15-5-3z" fill="#f6b23e" stroke="#c6701f" strokeWidth="0.6" />
          <circle cx="53" cy="25" r="2" fill="#5dd2e8" />
          <path d="M62 22c0-10 4-15 10-17 7 2 11 7 11 17v21c0 3-3 5-5 5H67c-3 0-5-2-5-5z" fill="#1a78e8" />
          <path d="M66 40c0-8 3-12 7-12s8 4 8 12z" fill="#7dc0f4" />
          <path d="M66 40h15v3H66z" fill="#b48cf0" />
          <circle cx="90" cy="16" r="2.6" fill="#f6b23e" />
        </svg>
      </div>
      <div className="flex w-[63px] shrink-0 items-center justify-center">
        <svg width="20" height="26" viewBox="0 0 20 26">
          <path d="M2 2v3h11V2M2 24v-3h11v3" fill="none" stroke="#111" />
          <rect x="1.5" y="8.5" width="12" height="9" fill="none" stroke="#111" />
          <rect x="17" y="3" width="2" height="5" fill="#111" />
          <rect x="17" y="11" width="2" height="4" fill="#111" />
          <rect x="17" y="18" width="2" height="5" fill="#111" />
        </svg>
      </div>
      <TaskIcon>
        <defs>
          <linearGradient id="ed1" x1="0" y1="0" x2="1" y2="1"><stop offset="0" stopColor="#35c1a0" /><stop offset="1" stopColor="#5ad364" /></linearGradient>
          <linearGradient id="ed2" x1="0" y1="0" x2="1" y2="1"><stop offset="0" stopColor="#0f7cc2" /><stop offset="1" stopColor="#0a4f96" /></linearGradient>
        </defs>
        <path d="M2 15C3 6 9 1 16 1c8 0 15 6 15 14 0 5-5 7-9 5-2-1-1-3-1-4 0-4-4-7-9-6-4 .8-8 3-10 5z" fill="url(#ed1)" />
        <path d="M2 15c3-5 8-6 11-5-3 2-5 6-4 11 1 4 5 8 10 10-9 1-18-6-17-16z" fill="url(#ed2)" />
        <path d="M19 31c-4-1-9-5-10-10 3 4 8 6 13 5 3-1 6-2 8-4-2 6-6 9-11 9z" fill="#1a9bd8" />
      </TaskIcon>
      <TaskIcon>
        <path d="M3 6h11l3 4H3z" fill="#d9a32c" />
        <path d="M3 10h26v18H3z" fill="#f8d568" />
        <rect x="10" y="18" width="12" height="10" fill="#2a88d8" />
        <rect x="14" y="23" width="4" height="5" fill="#f8d568" />
      </TaskIcon>
      <TaskIcon>
        <path d="M2 12L16 1l14 11v18H2z" fill="#0a6fbe" />
        <path d="M6 7h20v12L16 24 6 19z" fill="#fff" />
        <path d="M2 12l14 10 14-10v18H2z" fill="#36b1ea" />
        <path d="M2 30l14-11 14 11z" fill="#7fd0f4" />
      </TaskIcon>
      <TaskIcon>
        <rect x="7" y="2" width="24" height="7" fill="#41a5ee" />
        <rect x="7" y="9" width="24" height="7" fill="#2b7cd3" />
        <rect x="7" y="16" width="24" height="7" fill="#185abd" />
        <rect x="7" y="23" width="24" height="7" fill="#103f91" />
        <rect x="1" y="8" width="17" height="17" rx="1" fill="#185abd" />
        <text x="9.5" y="21" textAnchor="middle" fontSize="12" fontWeight="700" fill="#fff" fontFamily="Liberation Sans">W</text>
      </TaskIcon>
      <TaskIcon>
        <rect x="7" y="2" width="12" height="14" fill="#21a366" />
        <rect x="19" y="2" width="12" height="14" fill="#33c481" />
        <rect x="7" y="16" width="12" height="14" fill="#185c37" />
        <rect x="19" y="16" width="12" height="14" fill="#107c41" />
        <rect x="1" y="8" width="17" height="17" rx="1" fill="#107c41" />
        <text x="9.5" y="21" textAnchor="middle" fontSize="12" fontWeight="700" fill="#fff" fontFamily="Liberation Sans">X</text>
      </TaskIcon>
      <TaskIcon>
        <circle cx="17" cy="16" r="15" fill="#ed6c47" />
        <path d="M17 1a15 15 0 0 1 15 15H17z" fill="#ff8f6b" />
        <path d="M17 16h15a15 15 0 0 1-15 15z" fill="#d35230" />
        <rect x="1" y="8" width="17" height="17" rx="1" fill="#c43e1c" />
        <text x="9.5" y="21" textAnchor="middle" fontSize="12" fontWeight="700" fill="#fff" fontFamily="Liberation Sans">P</text>
      </TaskIcon>
      <TaskIcon>
        <path d="M5 6h26v20c0 2-5 5-13 5S5 28 5 26z" fill="#a4373a" />
        <path d="M5 16h26v-8H5z" fill="#c8404a" />
        <ellipse cx="18" cy="6" rx="13" ry="5" fill="#de7a8a" />
        <rect x="1" y="8" width="17" height="17" rx="1" fill="#a4262c" />
        <text x="9.5" y="21" textAnchor="middle" fontSize="12" fontWeight="700" fill="#fff" fontFamily="Liberation Sans">A</text>
      </TaskIcon>
      <TaskIcon>
        <circle cx="20" cy="6" r="4.5" fill="#7b83eb" />
        <circle cx="28" cy="9" r="3" fill="#5059c9" />
        <path d="M24 13h7v10c0 4-4 5-7 3z" fill="#5059c9" />
        <path d="M11 12h15v12c0 4-3 7-7 7s-8-3-8-7z" fill="#7b83eb" />
        <rect x="1" y="9" width="16" height="16" rx="1" fill="#4b53bc" />
        <text x="9" y="21.500" textAnchor="middle" fontSize="12" fontWeight="700" fill="#fff" fontFamily="Liberation Sans">T</text>
      </TaskIcon>
      <TaskIcon>
        <rect x="1" y="1" width="30" height="30" rx="2" fill="#1e1e1e" />
        <path d="M16 4h-4a4 4 0 0 0 0 8h4z" fill="#f24e1e" />
        <path d="M16 4h4a4 4 0 0 1 0 8h-4z" fill="#ff7262" />
        <path d="M16 12h-4a4 4 0 0 0 0 8h4z" fill="#a259ff" />
        <circle cx="20" cy="16" r="4" fill="#1abcfe" />
        <path d="M12 20h4v4a4 4 0 1 1-4-4z" fill="#0acf83" />
      </TaskIcon>
      <TaskIcon>
        <path d="M23 1l8 4v22l-8 4-13-13-6 5-3-2V11l3-2 6 5z" fill="#c292e8" />
        <path d="M23 9v14l-7-7z" fill="#efe2f8" />
        <path d="M1 11l3-2 6 5-6 5-3-2z" fill="#7a4fa8" />
        <path d="M10 14L23 1v8l-7 7z" fill="#8f5fc8" />
      </TaskIcon>
      <TaskIcon>
        <circle cx="16" cy="16" r="14" fill="#fff" />
        <path d="M10 8h12v14H10z" fill="#2f6fd0" />
        <text x="16" y="23" textAnchor="middle" fontSize="11" fontWeight="700" fill="#10203c" fontFamily="Liberation Sans">AI</text>
      </TaskIcon>
      <TaskIcon>
        <path d="M23 1l8 4v22l-8 4-13-12-6 5-3-2V10l3-2 6 5z" fill="#0a7fc8" />
        <path d="M23 1l8 4v22l-8 4z" fill="#1f9cf0" />
        <path d="M23 9v14l-8-7z" fill="#dfdfdf" />
        <path d="M1 10l3-2 6 5-3 3-6-3z" fill="#2489ca" />
      </TaskIcon>
      <TaskIcon active underline>
        <circle cx="16" cy="16" r="15" fill="#db4437" />
        <path d="M16 16L3 24a15 15 0 0 1 0-16z" fill="#0f9d58" />
        <path d="M3 8a15 15 0 0 0 13 23c3 0 6-1 8-2L16 16z" fill="#0f9d58" />
        <path d="M16 16l8 13c4-2 7-7 7-13 0-2-.5-4-1-5H16z" fill="#ffcd40" />
        <circle cx="16" cy="16" r="7.5" fill="#fff" />
        <circle cx="16" cy="16" r="5.8" fill="#4285f4" />
      </TaskIcon>
      <TaskIcon active underline>
        <path d="M16 1l12 6v18l-12 6-12-6V7z" fill="#24345e" />
        <path d="M16 4l9 4.500L16 13 7 8.500z" fill="#c8e4f2" />
        <path d="M7 10l8 4v14l-8-4z" fill="#7eb0da" />
        <path d="M17 14l8-4v14l-8 4z" fill="#e6edf4" />
      </TaskIcon>
      <div className="relative ml-[-1px] flex h-full w-[62px] shrink-0 items-center justify-center">
        <svg width="32" height="32" viewBox="0 0 32 32">
          <rect x="1" y="1" width="30" height="30" rx="3" fill="#f17f1f" />
          <path d="M7 8h6l3 4 3-4h6c2 4 0 6-3 8 3 2 5 4 3 8h-6l-3-4-3 4H7c-2-4 0-6 3-8-3-2-5-4-3-8z" fill="none" stroke="#fff" strokeWidth="3" />
        </svg>
        <div className="absolute bottom-0 left-[6px] right-[4px] h-[3px] bg-[#0078d4]" />
      </div>
      <div className="ml-auto flex items-center pr-[25px] font-['Open_Sans',sans-serif]">
        <svg width="32" height="22" viewBox="0 0 32 22">
          <path d="M1 1h25v19H3a2 2 0 0 1-2-2zM26 4h5v14a2 2 0 0 1-5 2" fill="none" stroke="#111" strokeWidth="1.8" />
          <rect x="5" y="7" width="8" height="8" fill="none" stroke="#111" strokeWidth="1.5" />
          <path d="M16 7h7M16 11h7M16 15h7M5 4h18" stroke="#111" strokeWidth="1.5" />
        </svg>
        <span className="ml-[8px] text-[17.5px] tracking-[-0.4px]">87°F</span>
        <svg width="18" height="10" viewBox="0 0 18 10" className="ml-[29px]"><path d="M1 9l8-8 8 8" fill="none" stroke="#111" strokeWidth="1.3" /></svg>
        <svg width="19" height="12" viewBox="0 0 19 12" className="ml-[13px]">
          <rect x="0.7" y="0.7" width="15.5" height="10.5" fill="none" stroke="#111" strokeWidth="1.3" />
          <rect x="2" y="2" width="9" height="8" fill="#111" />
          <rect x="17" y="4" width="2" height="4" fill="#111" />
        </svg>
        <svg width="20" height="18" viewBox="0 0 20 18" className="ml-[10px]">
          <path d="M1 6h3l5-5v16l-5-5H1z" fill="none" stroke="#222" />
          <path d="M12 6c1 2 1 4 0 6M15 4c2 3 2 7 0 10M18 2c2 4 2 10 0 14" fill="none" stroke="#999" />
        </svg>
        <span className="ml-[12px] text-[14px]">ENG</span>
        <div className="ml-[21px] flex w-[60px] flex-col items-center whitespace-nowrap text-[15.2px] leading-[23px]">
          <span>9:10 PM</span>
          <span>4/17/2023</span>
        </div>
        <div className="relative ml-[32px] h-[24px] w-[21px]">
          <svg width="21" height="24" viewBox="0 0 21 24">
            <path d="M0 0h21v17h-8l-4 5v-5H0z" fill="#000" />
            <path d="M4 5h13M4 9h13M4 13h9" stroke="#fff" strokeWidth="1.3" />
          </svg>
          <span className="absolute left-[8px] top-[9px] flex h-[20px] w-[20px] items-center justify-center rounded-full border border-[#777] bg-[#dfdfdf] text-[13px] leading-none">4</span>
        </div>
      </div>
    </footer>
  )
}

export default function App() {
  return (
    <div className="relative flex h-[1080px] w-[1920px] flex-col overflow-hidden bg-[#f0f0f0] font-['Noto_Sans',sans-serif] text-black">
      {/* Title bar */}
      <div className="flex h-[26px] shrink-0 items-center bg-white">
        <svg width="16" height="18" viewBox="0 0 32 36" className="ml-[5px]">
          <path d="M16 1l14 7v20l-14 7-14-7V8z" fill="#24345e" />
          <path d="M16 5l10 5-10 5-10-5z" fill="#c8e4f2" />
          <path d="M6 12l9 5v13l-9-5z" fill="#7eb0da" />
          <path d="M17 17l9-5v13l-9 5z" fill="#e6edf4" />
        </svg>
        <span className="ml-[6px] font-['Open_Sans',sans-serif] text-[14.35px]">Hotelmanagement - NetBeans IDE 8.2</span>
        <div className="ml-auto flex items-center">
          <div className="mr-[47px] h-px w-[11px] bg-black" />
          <svg width="12" height="12" viewBox="0 0 12 12" className="mr-[47px]">
            <rect x="0.5" y="2.5" width="9" height="9" fill="none" stroke="#000" />
            <path d="M2.5 2.5v-2h9v9h-2" fill="none" stroke="#000" />
          </svg>
          <svg width="13" height="13" viewBox="0 0 13 13" className="mr-[25px]"><path d="M0.5 0.5l12 12M12.5 0.5l-12 12" stroke="#000" /></svg>
        </div>
      </div>
      {/* Menu */}
      <div className="flex h-[27px] shrink-0 items-center gap-[7.8px] bg-white pl-[4px] pt-[2px] font-['Open_Sans',sans-serif] text-[14.65px]">
        {menuItems.map((m) => (
          <span key={m}>{m}</span>
        ))}
        <div className="ml-auto flex h-[22px] w-[243px] items-center border border-[#7f9db9] bg-white text-[12.5px]">
          <div className="flex h-full w-[25px] items-center justify-center bg-[#f0f0f0]">
            <svg width="20" height="14" viewBox="0 0 20 14">
              <circle cx="6" cy="6" r="4.5" fill="#dceaf6" stroke="#444" />
              <path d="M9 9l4 4" stroke="#444" strokeWidth="2" />
              <path d="M15 5h5l-2.500 3z" fill="#333" />
            </svg>
          </div>
          <span className="ml-[4px] font-['Noto_Sans',sans-serif] text-[#6f7680]">Search (Ctrl+I)</span>
        </div>
      </div>
      <MainToolbar />
      {/* Main area */}
      <div className="flex min-h-0 flex-1 pt-[7px]">
        <div className="flex w-[24px] shrink-0 flex-col items-center pt-[3px]">
          <RestoreIcon />
          <span className="mt-[10px] rotate-180 text-[12px] leading-none [writing-mode:vertical-rl]">Navigator</span>
          <svg width="16" height="16" viewBox="0 0 15 15" className="mt-[2px]">
            <circle cx="7.5" cy="7.5" r="6.8" fill="#e8eef4" stroke="#7c8a98" />
            <path d="M11 3L8.500 8.500 6.500 6.500z" fill="#d84a3a" />
            <path d="M4 12l2.500-5.500 2 2z" fill="#8a98a8" />
          </svg>
        </div>
        <Project />
        <div className="w-[4px] shrink-0" />
        <Editor />
        <div className="w-[3px] shrink-0" />
        <Palette />
      </div>
      {/* Status bar */}
      <div className="flex h-[26px] shrink-0 items-center text-[12.5px]">
        <div className="ml-[7px]"><RestoreIcon /></div>
        <svg width="16" height="16" viewBox="0 0 16 16" className="ml-[9px]">
          <rect x="0.5" y="0.5" width="13" height="14" fill="#eef1f5" stroke="#667" />
          <rect x="1" y="1" width="12" height="2.5" fill="#8aa0b8" />
          <circle cx="11" cy="11" r="4.5" fill="#f0c060" stroke="#a87820" />
        </svg>
        <span className="ml-[5px] text-[12px]">Output</span>
        <span className="ml-auto">Hotelmanagement (run) #3</span>
        <div className="ml-[3px] flex h-[17px] w-[200px] items-center justify-center border border-[#b5b5b5] border-l-2 border-l-[#2a78c8] bg-[#e8e8e8] text-[#2a78c8]">running...</div>
        <svg width="11" height="11" viewBox="0 0 11 11" className="ml-[6px]">
          <rect x="0.5" y="0.5" width="10" height="10" fill="#999" stroke="#444" />
          <path d="M2 2h2v2H2zM7 2h2v2H7zM4.500 4.500h2v2h-2zM2 7h2v2H2zM7 7h2v2H7z" fill="#eee" />
        </svg>
        <span className="ml-[5px]">(2 more...)</span>
        <span className="ml-[15px] flex h-[15px] w-[16px] items-center justify-center rounded-full border border-[#667] bg-[#e8eef4] text-[11px] font-bold leading-none">1</span>
        <div className="ml-[3px] h-[15px] w-px bg-[#999]" />
        <div className="ml-[131px] mr-[29px] h-[15px] w-px bg-[#999]" />
      </div>
      <Taskbar />
      {/* Window preview tooltip of the taskbar */}
      <div className="absolute left-[1089px] top-[793px] h-[45px] w-[338px] whitespace-nowrap border border-[#d0d0d0] bg-white pl-[5px] pt-[2px] font-['Open_Sans',sans-serif] text-[14.6px] leading-[20px] text-[#cfcfcf] shadow-[2px_2px_3px_#bbbbbb]">
        <div className="tracking-[-0.1px]">localhost / 127.0.0.1 / hotelmanagement / room |</div>
        <div className="tracking-[-0.1px]">phpMyAdmin 5.2.0 - Google Chrome</div>
      </div>
    </div>
  )
}
